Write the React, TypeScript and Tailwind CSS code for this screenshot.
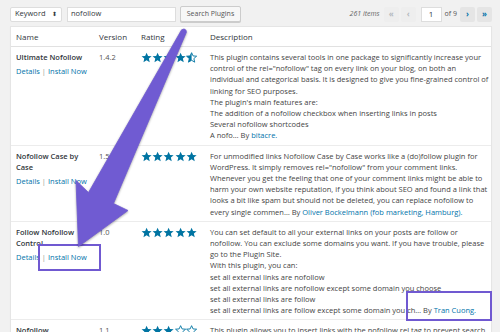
import React from "react";

type Plugin = {
  name: string[];
  version: string;
  rating: number;
  lines: string[];
  tail: string;
  author: string;
};

const plugins: Plugin[] = [
  {
    name: ["Ultimate Nofollow"],
    version: "1.4.2",
    rating: 4.5,
    lines: [
      "This plugin contains several tools in one package to significantly increase your",
      "control of the rel=\"nofollow\" tag on every link on your blog, on both an",
      "individual and categorical basis. It is designed to give you fine-grained control of",
      "linking for SEO purposes.",
      "The plugin's main features are:",
      "The addition of a nofollow checkbox when inserting links in posts",
      "Several nofollow shortcodes",
    ],
    tail: "A nofo… By ",
    author: "bitacre.",
  },
  {
    name: ["Nofollow Case by", "Case"],
    version: "1.5.0",
    rating: 5,
    lines: [
      "For unmodified links Nofollow Case by Case works like a (do)follow plugin for",
      "WordPress. It simply removes rel=\"nofollow\" from your comment links.",
      "Whenever you get the feeling that one of your comment links might be able to",
      "harm your own website reputation, if you think about SEO and found a link that",
      "looks a bit like spam but should not be deleted, you can replace nofollow to",
    ],
    tail: "every single commen… By ",
    author: "Oliver Bockelmann (fob marketing, Hamburg).",
  },
  {
    name: ["Follow Nofollow", "Control"],
    version: "1.0",
    rating: 5,
    lines: [
      "You can set default to all your external links on your posts are follow or",
      "nofollow. You can exclude some domains you want. If you have trouble, please",
      "go to the Plugin Site.",
      "With this plugin, you can:",
      "set all external links are nofollow",
      "set all external links are nofollow except some domain you choose",
      "set all external links are follow",
    ],
    tail: "set all external links are follow except some domain you ch… By ",
    author: "Tran Cuong.",
  },
  {
    name: ["Nofollow"],
    version: "1.1",
    rating: 3,
    lines: [
      "This plugin allows you to insert links with the nofollow rel tag to prevent search",
    ],
    tail: "",
    author: "",
  },
];

const STAR = "10,1.2 12.6,7 19,7.5 14.1,11.7 15.6,18.2 10,14.8 4.4,18.2 5.9,11.7 1,7.5 7.4,7";

const Star = ({ kind }: { kind: "full" | "half" | "empty" }) => (
  <svg viewBox="0 0 20 20" className="w-[11.2px] h-[11.2px]">
    <defs>
      <clipPath id="halfclip">
        <rect x="0" y="0" width="10" height="20" />
      </clipPath>
    </defs>
    {kind === "full" && <polygon points={STAR} fill="#0074a2" />}
    {kind !== "full" && (
      <polygon points={STAR} fill="none" stroke="#0074a2" strokeWidth="1.6" strokeLinejoin="round" />
    )}
    {kind === "half" && <polygon points={STAR} fill="#0074a2" clipPath="url(#halfclip)" />}
  </svg>
);

const Stars = ({ rating }: { rating: number }) => (
  <div className="flex h-[11.2px] items-center">
    {[1, 2, 3, 4, 5].map((i) => (
      <Star key={i} kind={rating >= i ? "full" : rating >= i - 0.5 ? "half" : "empty"} />
    ))}
  </div>
);

const PageBtn = ({ label, active }: { label: string; active?: boolean }) => (
  <div
    className={`w-[15px] h-[15px] flex items-center justify-center text-[8px] font-bold rounded-[2px] ${
      active ? "bg-[#e5e5e5] text-[#0073aa]" : "bg-[#eeeeee] text-[#b4b9be]"
    }`}
  >
    {label}
  </div>
);

export default function App() {
  return (
    <div className="relative w-[500px] h-[332px] overflow-hidden bg-[#f1f1f1] text-[#444] font-['Open_Sans',sans-serif]">
      {/* toolbar */}
      <div className="flex items-center h-[26px] pl-[10px] pr-[8px] pt-[5px] pb-[3px]">
        <div className="flex items-center justify-between w-[52px] h-[15px] bg-white border border-[#ddd] rounded-[2px] px-[4px] text-[7.5px] text-[#32373c]">
          <span>Keyword</span>
          <span className="text-[6px] leading-none">⬍</span>
        </div>
        <div className="ml-[5px] w-[109px] h-[15px] bg-white border border-[#ddd] px-[3px] flex items-center text-[7.5px] text-[#32373c]">
          nofollow
        </div>
        <div className="ml-[4px] w-[61px] h-[16px] bg-[#f7f7f7] border border-[#cccccc] rounded-[2px] flex items-center justify-center text-[7px] text-[#555] shadow-[0_1px_0_#ccc]">
          Search Plugins
        </div>
        <div className="ml-auto flex items-center gap-[2px]">
          <span className="italic text-[7px] text-[#666] mr-[2px]">261 items</span>
          <PageBtn label="«" />
          <PageBtn label="‹" />
          <div className="ml-[3px] w-[21px] h-[15px] bg-white border border-[#ddd] flex items-center justify-center text-[8px] text-[#32373c]">
            1
          </div>
          <span className="text-[7px] text-[#555] mx-[1px]">of 9</span>
          <PageBtn label="›" active />
          <PageBtn label="»" active />
        </div>
      </div>

      {/* table */}
      <div className="ml-[10px] w-[482px] bg-white border border-[#e5e5e5] shadow-[0_1px_1px_rgba(0,0,0,0.04)]">
        <div className="grid grid-cols-[83px_42px_69px_1fr] h-[20px] items-center border-b border-[#e1e1e1] text-[8px] text-[#32373c]">
          <div className="pl-[5px]">Name</div>
          <div className="pl-[5px]">Version</div>
          <div className="pl-[5px]">Rating</div>
          <div className="pl-[5px]">Description</div>
        </div>
        {plugins.map((p) => (
          <div
            key={p.name.join(" ")}
            className="grid grid-cols-[83px_42px_69px_1fr] pt-[5px] pb-[3px] border-b border-[#ececec] text-[7.5px] leading-[11.2px]"
          >
            <div className="pl-[5px]">
              {p.name.map((n) => (
                <div key={n} className="font-semibold text-[#32373c] whitespace-nowrap">
                  {n}
                </div>
              ))}
              <div className="mt-[3px] whitespace-nowrap">
                <span className="text-[#0073aa]">Details</span>
                <span className="text-[#999] mx-[2px]">|</span>
                <span className="text-[#0073aa]">Install Now</span>
              </div>
            </div>
            <div className="pl-[5px] text-[#555]">{p.version}</div>
            <div className="pl-[5px]">
              <Stars rating={p.rating} />
            </div>
            <div className="pl-[5px] text-[#444]">
              {p.lines.map((l, i) => (
                <div key={i} className="whitespace-nowrap">
                  {l}
                </div>
              ))}
              {p.tail && (
                <div className="whitespace-nowrap">
                  {p.tail}
                  <span className="text-[#0073aa]">{p.author}</span>
                </div>
              )}
            </div>
          </div>
        ))}
      </div>

      {/* annotation boxes */}
      <div className="absolute left-[38px] top-[244px] w-[63px] h-[27px] border-2 border-[#7059d1]" />
      <div className="absolute left-[406px] top-[291px] w-[86px] h-[30px] border-2 border-[#7059d1]" />

      {/* arrow */}
      <svg
        className="absolute left-0 top-0 pointer-events-none drop-shadow-[0_1px_1px_rgba(0,0,0,0.35)]"
        width="500"
        height="332"
        viewBox="0 0 500 332"
      >
        <path
          d="M181.6,29.8 L88.5,192.5 L76,180.5 L78.5,246.5 L128,210.5 L113.5,203.5 L186.4,32.2 Q186,27.6 181.6,29.8 Z"
          fill="#705bd2"
          stroke="#705bd2"
          strokeWidth="0.8"
          strokeLinejoin="round"
        />
      </svg>
    </div>
  );
}
